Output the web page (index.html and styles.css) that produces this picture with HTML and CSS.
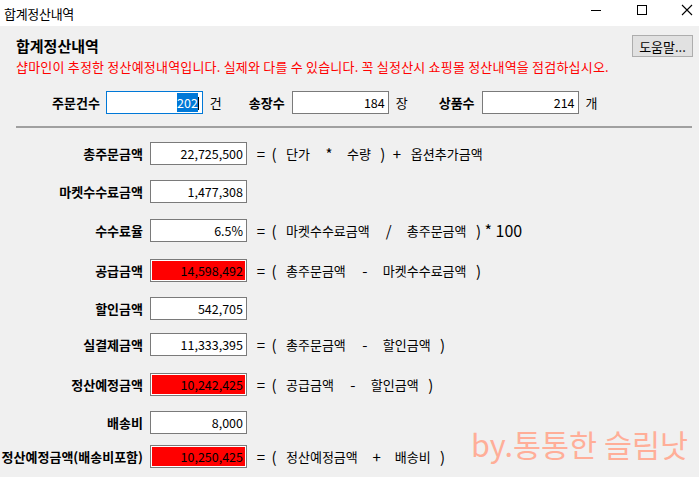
FILE: index.html
```html
<!DOCTYPE html>
<html>
<head>
    <title>합계정산내역</title>
    <link rel="stylesheet" href="styles.css">
</head>
<body>
    <div class="window">
        <header class="titlebar">
            <span class="title-text">합계정산내역</span>
            <div class="controls">
                <svg class="ctl" width="46" height="26" viewBox="0 0 46 26"><path d="M18 10.5h10" stroke="#000" stroke-width="1"/></svg>
                <svg class="ctl" width="46" height="26" viewBox="0 0 46 26"><rect x="18.5" y="5.5" width="9" height="9" fill="none" stroke="#000" stroke-width="1"/></svg>
                <svg class="ctl" width="34" height="26" viewBox="0 0 34 26"><path d="M17 5l10 10M27 5l-10 10" stroke="#000" stroke-width="1.1"/></svg>
            </div>
        </header>

        <div class="client">
            <div class="head">
                <div>
                    <h1 class="heading">합계정산내역</h1>
                    <p class="notice">샵마인이 추정한 정산예정내역입니다. 실제와 다를 수 있습니다. 꼭 실정산시 쇼핑몰 정산내역을 점검하십시오.</p>
                </div>
                <button class="help-btn">도움말...</button>
            </div>

            <div class="summary">
                <label class="sum-label">주문건수</label>
                <div class="field field-focus"><span class="selected">202</span><span class="caret"></span></div>
                <span class="unit">건</span>
                <label class="sum-label sum-gap">송장수</label>
                <div class="field">184</div>
                <span class="unit">장</span>
                <label class="sum-label sum-gap-wide">상품수</label>
                <div class="field">214</div>
                <span class="unit">개</span>
            </div>

            <div class="divider"></div>

            <div class="rows">
                <div class="row">
                    <label class="row-label">총주문금액</label>
                    <div class="field">22,725,500</div>
                    <div class="formula">
                        <span class="sym">=</span><span class="sym open">(</span>
                        <span class="term">단가</span><span class="sym op">*</span><span class="term">수량</span>
                        <span class="sym close">)</span><span class="sym plus">+</span><span class="term">옵션추가금액</span>
                    </div>
                </div>
                <div class="row">
                    <label class="row-label">마켓수수료금액</label>
                    <div class="field">1,477,308</div>
                </div>
                <div class="row">
                    <label class="row-label">수수료율</label>
                    <div class="field">6.5%</div>
                    <div class="formula">
                        <span class="sym">=</span><span class="sym open">(</span>
                        <span class="term">마켓수수료금액</span><span class="sym op">/</span><span class="term">총주문금액</span>
                        <span class="sym close">)</span><span class="times">* 100</span>
                    </div>
                </div>
                <div class="row row-wide">
                    <label class="row-label">공급금액</label>
                    <div class="field field-red">14,598,492</div>
                    <div class="formula">
                        <span class="sym">=</span><span class="sym open">(</span>
                        <span class="term">총주문금액</span><span class="sym op">-</span><span class="term">마켓수수료금액</span>
                        <span class="sym close">)</span>
                    </div>
                </div>
                <div class="row">
                    <label class="row-label">할인금액</label>
                    <div class="field">542,705</div>
                </div>
                <div class="row row-tight">
                    <label class="row-label">실결제금액</label>
                    <div class="field">11,333,395</div>
                    <div class="formula">
                        <span class="sym">=</span><span class="sym open">(</span>
                        <span class="term">총주문금액</span><span class="sym op">-</span><span class="term">할인금액</span>
                        <span class="sym close">)</span>
                    </div>
                </div>
                <div class="row row-wide">
                    <label class="row-label">정산예정금액</label>
                    <div class="field field-red">10,242,425</div>
                    <div class="formula">
                        <span class="sym">=</span><span class="sym open">(</span>
                        <span class="term">공급금액</span><span class="sym op">-</span><span class="term">할인금액</span>
                        <span class="sym close">)</span>
                    </div>
                </div>
                <div class="row">
                    <label class="row-label">배송비</label>
                    <div class="field">8,000</div>
                </div>
                <div class="row row-last">
                    <label class="row-label">정산예정금액(배송비포함)</label>
                    <div class="field field-red">10,250,425</div>
                    <div class="formula">
                        <span class="sym">=</span><span class="sym open">(</span>
                        <span class="term">정산예정금액</span><span class="sym op">+</span><span class="term">배송비</span>
                        <span class="sym close">)</span>
                    </div>
                </div>
            </div>
        </div>

        <div class="watermark">by.통통한 슬림낫</div>
    </div>
</body>
</html>
```

FILE: styles.css
```css
body {
    margin: 0;
    font-family: "Noto Sans CJK KR", "Noto Sans", sans-serif;
    font-size: 13px;
    color: #000;
    background: #f0f0f0;
}
.window {
    position: relative;
    width: 699px;
    height: 477px;
    overflow: hidden;
}
.titlebar {
    display: flex;
    justify-content: space-between;
    align-items: center;
    height: 26px;
    background: white;
}
.title-text {
    padding-left: 4px;
    letter-spacing: -0.3px;
}
.controls {
    display: flex;
    align-self: flex-start;
}
.ctl {
    display: block;
}
.client {
    padding: 9px 6px 0 16px;
}
.head {
    display: flex;
    justify-content: space-between;
    align-items: flex-start;
}
.heading {
    margin: 1px 0 0;
    font-size: 15px;
    font-weight: bold;
    line-height: 20px;
}
.notice {
    margin: 3px 0 0;
    color: #ff0000;
    line-height: 16px;
    letter-spacing: 0.2px;
}
.help-btn {
    width: 61px;
    height: 22px;
    padding: 0;
    font-family: inherit;
    font-size: 13px;
    background: #e1e1e1;
    border: 1px solid #adadad;
}
.summary {
    display: flex;
    align-items: center;
    margin-top: 16px;
    padding-left: 36px;
}
.sum-label {
    font-weight: bold;
    margin-right: 6px;
}
.sum-gap {
    margin-left: 27px;
    margin-right: 7px;
}
.sum-gap-wide {
    margin-left: 31px;
    margin-right: 7px;
}
.unit {
    margin-left: 7px;
}
.field {
    box-sizing: border-box;
    width: 97px;
    height: 23px;
    padding-right: 3px;
    border: 1px solid #7a7a7a;
    background: white;
    font-size: 12.5px;
    line-height: 21px;
    text-align: right;
    white-space: nowrap;
}
.field-focus {
    border-color: #0078d7;
}
.selected {
    background: #0078d7;
    color: white;
}
.caret {
    display: inline-block;
    width: 1px;
    height: 13px;
    background: #000;
    vertical-align: -2px;
}
.field-red {
    background: #ff0000;
    box-shadow: inset 0 0 0 1px white;
}
.divider {
    width: 676px;
    height: 2px;
    margin-top: 12px;
    background: #a0a0a0;
}
.rows {
    display: flex;
    flex-direction: column;
    gap: 15px;
    margin: 14px 0 0 -16px;
}
.row {
    display: flex;
    align-items: center;
}
.row-wide {
    margin-top: 2px;
}
.row-tight {
    margin-top: -2px;
}
.row-last {
    margin-top: -4px;
}
.row-label {
    width: 143px;
    margin-right: 7px;
    font-weight: bold;
    text-align: right;
    white-space: nowrap;
}
.formula {
    display: flex;
    align-items: center;
    margin-left: 9px;
    white-space: nowrap;
}
.sym {
    width: 10px;
    font-size: 15px;
    text-align: center;
}
.open {
    margin-left: 3px;
    margin-right: 7px;
}
.op {
    margin: 0 13px 0 14px;
}
.close {
    margin-left: 7px;
}
.plus {
    margin-left: 4px;
    margin-right: 9px;
}
.times {
    margin-left: 1px;
    font-size: 16px;
}
.watermark {
    position: absolute;
    left: 471px;
    top: 422px;
    font-size: 30.5px;
    color: #ffae98;
    white-space: nowrap;
}
```
